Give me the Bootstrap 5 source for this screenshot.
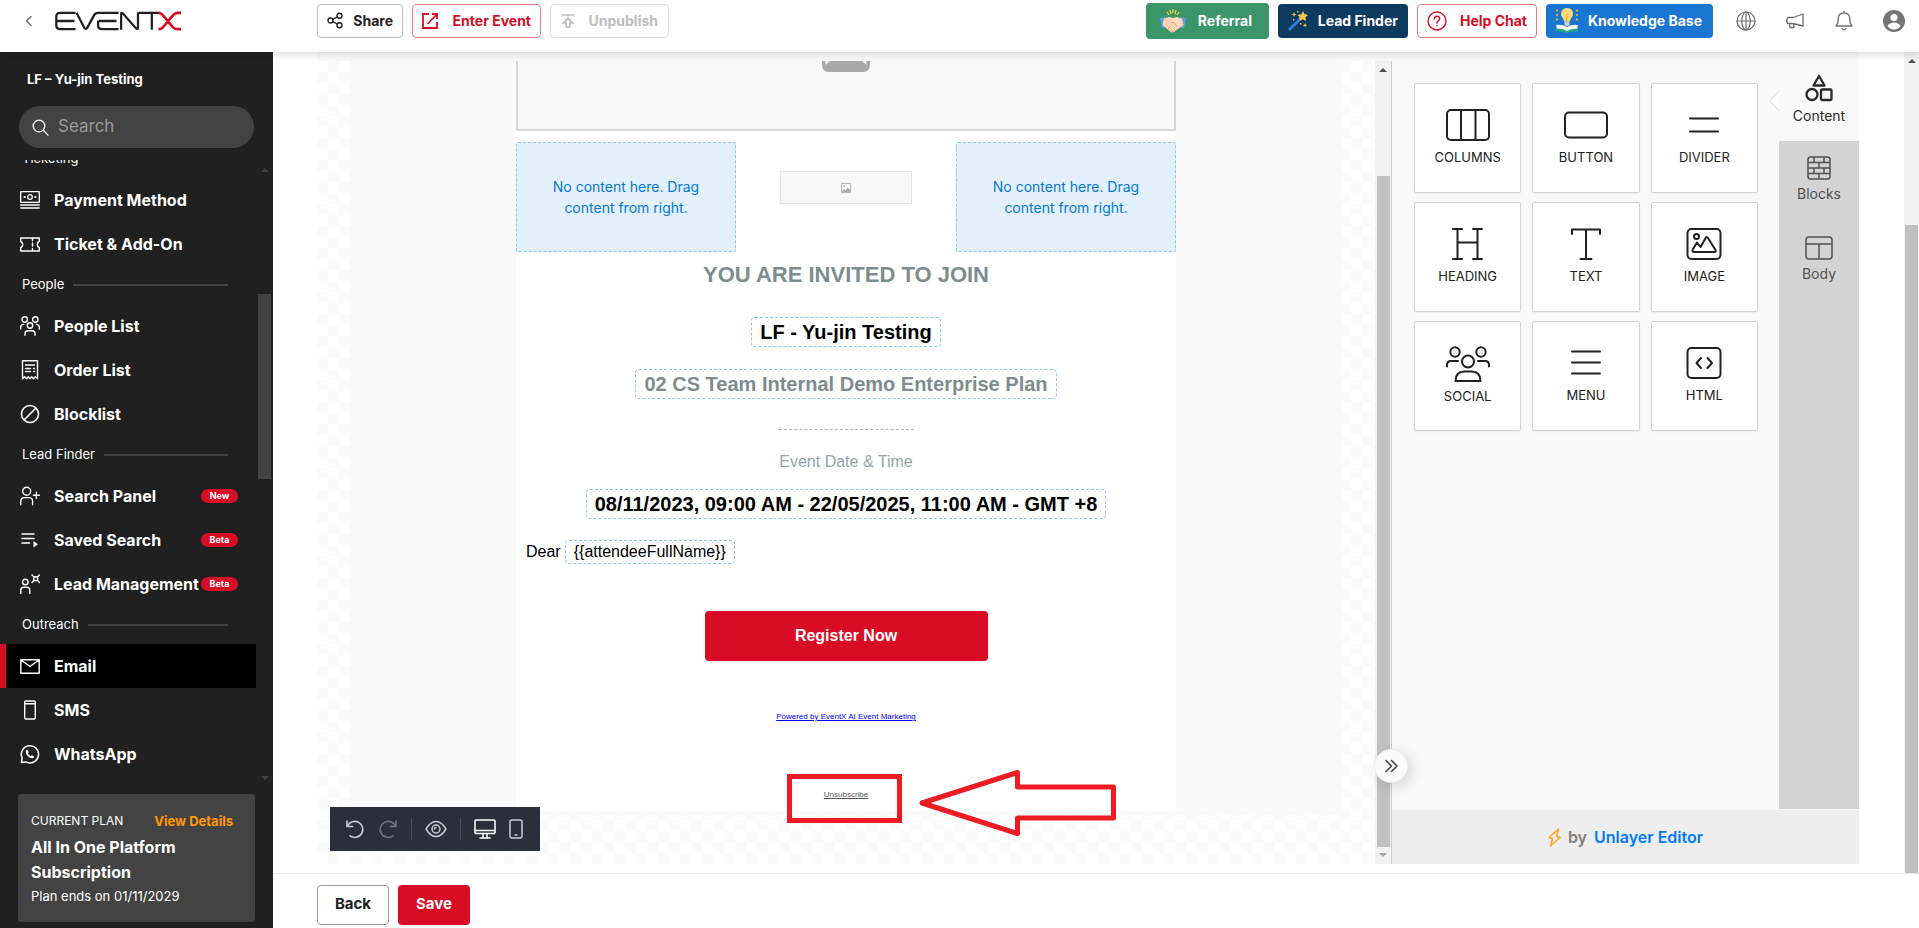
<!DOCTYPE html>
<html lang="en">
<head>
<meta charset="utf-8">
<meta name="viewport" content="width=device-width, initial-scale=1">
<title>EventX – Email editor</title>
<link href="https://cdn.jsdelivr.net/npm/bootstrap@5.3.0/dist/css/bootstrap.min.css" rel="stylesheet">
<style>
  :root { --brand: #d80c24; --ink: #212121; --side: #202020; --side-2: #434343; }
  body { font-family: Inter, "Liberation Sans", sans-serif; font-size: 14px; color: var(--ink); background: #fff; }
  svg { display: block; flex: none; }
  .ln { fill: none; stroke: currentColor; stroke-linecap: round; stroke-linejoin: round; }

  /* Header */
  .topbar { height: 52px; padding: 0 14px 11px 22px; z-index: 5; box-shadow: 0 2px 8px rgba(0,0,0,.16); }
  .brand-zone { width: 295px; }
  .btn-row { gap: 9px; }
  .icon-row { gap: 29px; margin-left: 14px; }
  .hbtn { height: 34px; padding: 0 9px; border-radius: 4px; font-size: 14px; font-weight: 700; display: inline-flex; align-items: center; justify-content: space-between; white-space: nowrap; line-height: 20px; }
  .hbtn-share { width: 86px; border-color: #bdbdbd; color: var(--ink); }
  .hbtn-enter { width: 129px; border-color: #ec7888; color: var(--brand); }
  .hbtn-unpub { width: 119px; padding: 0 10px; }
  .hbtn-unpub:disabled { border-color: #dedede; color: #bdbdbd; opacity: 1; }
  .hbtn-ref { width: 123px; height: 36px; padding: 0 16px 0 13px; background: #3a9569; color: #fff; }
  .hbtn-lead { width: 130px; background: #0d3a5f; color: #fff; }
  .hbtn-help { width: 120px; border-color: #ec7888; color: var(--brand); }
  .hbtn-kb { width: 167px; padding: 0 10px 0 8px; background: #1976d2; color: #fff; }
  .icon-btn { padding: 0; border: 0; background: none; color: #6e6e6e; }

  /* Sidebar */
  .sidebar { width: 273px; background: var(--side); color: #fff; }
  .event-name { padding: 17px 27px 0; font-size: 13px; line-height: 20px; font-weight: 700; }
  .search-box { height: 42px; margin: 17px 19px 0; padding: 0 13px; gap: 7px; border-radius: 21px; background: var(--side-2); }
  .search-box input { border: 0; background: none; color: #fff; outline: 0; width: 100%; font-size: 17px; }
  .search-box input::placeholder { color: #9a9a9a; opacity: 1; }
  .side-scroll { margin-top: 12px; height: 624px; overflow: hidden; }
  .side-menu { width: 256px; margin-top: -20px; }
  .side-head { height: 38px; padding: 0 28px 0 22px; gap: 9px; font-size: 13px; }
  .side-head::after { content: ""; flex: 1; height: 2px; background: var(--side-2); }
  .side-link { height: 44px; padding: 0 18px 0 20px; color: #fff; font-size: 16px; font-weight: 700; text-decoration: none; white-space: nowrap; }
  .side-link svg { margin-right: 14px; }
  .side-link.active { background: #000; border-left: 6px solid var(--brand); padding-left: 14px; }
  .tag { margin-left: auto; flex: none; border-radius: 7px; width: 37px; height: 14px; background: var(--brand); font-size: 9px; line-height: 14px; text-align: center; font-weight: 700; }
  .side-bar { width: 17px; color: var(--side-2); }
  .side-thumb { width: 13px; height: 185px; margin-top: 122px; background: var(--side-2); }
  .plan { margin: 10px 18px 6px; padding: 17px 13px 12px; height: 128px; border-radius: 4px; background: var(--side-2); }
  .plan-head { line-height: 20px; margin-bottom: 4px; font-size: 12px; }
  .plan-name { font-size: 16px; line-height: 25px; font-weight: 700; }
  .plan-end { font-size: 13px; line-height: 22px; }
  .plan a { color: #ff9800; font-size: 13px; font-weight: 700; text-decoration: none; margin-right: 9px; }

  .up, .down { width: 0; height: 0; border: 4px solid transparent; }
  .up { border-top-width: 0; border-bottom-color: currentColor; }
  .down { border-bottom-width: 0; border-top-color: currentColor; }

  /* Page scrollbar */
  .page-bar { width: 15px; background: #f1f1f1; color: #505050; padding-top: 7px; }
  .page-thumb { width: 13px; margin-top: 162px; background: #c1c1c1; }

  /* Editor */
  .editor { margin: 0 45px 9px 44px; padding-top: 9px; background: #f9f9f9; }
  .canvas { overflow: hidden; background: repeating-conic-gradient(#fbfbfb 0 25%, #fff 0 50%) 0 0 / 22px 22px; }
  .sheet { margin: 0 33px; background: #fafafa; padding-bottom: 4px; }
  .mail { width: 660px; height: 750px; margin: 0 auto; background: #fff; font-family: "Liberation Sans", Arial, sans-serif; text-align: center; color: #000; }
  .hero-ph { height: 70px; border: 2px solid #d6d6d6; border-top: 0; background: #f9f9f9; }
  .mail-cols { margin-top: 11px; }
  .drop-zone { height: 110px; border: 1px dashed #8cc8ec; background: #e1f0fa; color: #0879d1; border-radius: 2px; font-family: Inter, sans-serif; font-size: 14px; line-height: 21px; }
  .small-ph { width: 132px; height: 33px; margin-top: 29px; border: 1px solid #e2e2e2; background: #f8f8f8; }
  .gray-title { color: #7e8c8d; }
  .m-h1 { font-size: 22px; line-height: 30px; font-weight: 700; margin: 8px 0 27px; }
  .merge { display: inline-block; border: 1px dashed #8cc8ec; border-radius: 4px; padding: 0 8px; font-size: 20px; line-height: 28px; font-weight: 700; }
  .merge-sm { font-size: 16px; line-height: 22px; font-weight: 400; }
  .dash-line { width: 135px; margin: 30px auto 20px; border-top: 1px dashed #b5b5b5; }
  .date-label { font-size: 16px; line-height: 24px; margin-bottom: 15px; color: #95a5a6; }
  .greeting { padding: 21px 10px 47px; font-size: 16px; }
  .register { width: 283px; height: 50px; border: 0; border-radius: 4px; background: var(--brand); color: #fff; font-size: 16px; font-weight: 700; }
  .fine { font-size: 8px; line-height: 12px; margin-top: 50px; }
  .unsub { padding-right: 3px; margin-top: 51px; }
  .mark-box { width: 115px; height: 49px; padding: 10px 0 0 3px; border: 5px solid #ed1c24; font-size: 8px; line-height: 12px; }
  .arrow { left: 403px; top: -5px; }

  .canvas-bar { width: 16px; background: #f1f1f1; color: #505050; padding: 7px 0; }
  .canvas-thumb { width: 13px; margin: 104px 0 6px; background: #c1c1c1; }
  .toolbar-dark { left: 13px; bottom: 13px; width: 210px; height: 44px; background: #29303a; color: #c9cdd2; padding: 0 15px; gap: 13px; }
  .toolbar-dark .rule { width: 1px; height: 22px; background: #4b525c; }

  .panel { width: 468px; border-left: 1px solid #cdcdcd; background: #f9f9f9; }
  .tools { display: grid; grid-template-columns: repeat(3, 1fr); gap: 9px 11px; align-content: start; padding: 22px 21px 0 22px; }
  .tool { height: 110px; border: 1px solid #d4d4d4; border-radius: 2px; background: #fff; box-shadow: 0 1px 2px rgba(0,0,0,.06); font-size: 13px; line-height: 20px; color: #212121; padding: 0 0 1px; }
  .tool svg { margin: 0 auto 6px; }
  .tabs { width: 80px; background: #d4d4d4; }
  .tab-btn { height: 80px; border: 0; padding: 0 0 3px; background: none; color: #505050; font-size: 14px; line-height: 20px; }
  .tab-btn.active { background: #f9f9f9; color: #2a2a2a; }
  .notch { left: -10px; top: 30px; }
  .panel-foot { height: 55px; background: #eee; border-top: 1px solid #f9f9f9; font-size: 16px; font-weight: 600; color: #7f7f7f; gap: 7px; }
  .panel-foot a { color: #007bff; text-decoration: none; }
  .collapse-btn { left: -18px; bottom: 81px; width: 34px; height: 34px; border-radius: 50%; border: 1px solid #ececec; background: #fafafa; color: #444; padding: 0; box-shadow: 4px 4px 14px rgba(0,0,0,.14); z-index: 2; }

  .actions { height: 55px; padding: 11px 44px 0; border-top: 1px solid #e8e8e8; gap: 9px; }
  .act { height: 40px; width: 72px; padding: 0 0 2px; border-radius: 4px; font-size: 15px; font-weight: 700; }
  .act-back { border-color: #999; color: var(--ink); }
  .act-save { background: var(--brand); color: #fff; }
</style>
</head>
<body class="vh-100 d-flex flex-column overflow-hidden">

<header class="topbar d-flex align-items-center bg-white position-relative flex-shrink-0">
  <div class="brand-zone d-flex align-items-center">
    <button class="icon-btn" aria-label="Go back"><svg width="14" height="14" viewBox="0 0 14 14" class="ln" stroke-width="1.5"><path d="M9 2.5 4.500 7 9 11.500"/></svg></button>
    <svg class="ms-3" width="129" height="20" viewBox="-3 0 126 19" fill="none" stroke="#212121" stroke-width="2.200" aria-label="EventX">
      <path d="M20 1.500H5Q1.200 1.500 1.200 5V14Q1.200 17.500 5 17.500H20M2 9.500H19M21 1.500 28.500 16Q30 18.500 31.500 16L38 4Q39.300 1.500 42 1.500H62M43 9.500H60M62 17.500H46Q42 17.500 42 14V9M64.500 18V3Q64.500 .5 66.500 2.500L79 16.500Q81 18.500 81 15.500V1M82 1.500H102M94.500 2V18"/>
      <path stroke="#d80c24" stroke-width="2.600" d="M101 1.500Q103.500 1.500 105 3.500L115 15.500Q116.800 17.500 119.500 17.500H123M123 1.500H120Q117 1.500 115.500 3.500L105.500 15.500Q104 17.500 101 17.500"/>
    </svg>
  </div>
  <div class="btn-row d-flex align-items-center">
    <button class="btn hbtn hbtn-share"><svg width="17" height="17" viewBox="0 0 17 17" class="ln" stroke-width="1.400"><circle cx="3.500" cy="8.500" r="2.500"/><circle cx="12.500" cy="3.800" r="2.500"/><circle cx="12.500" cy="13.200" r="2.500"/><path d="m5.800 7.300 4.400-2.300M5.800 9.700l4.400 2.300"/></svg>Share</button>
    <button class="btn hbtn hbtn-enter"><svg width="16" height="16" viewBox="0 0 16 16" fill="none" stroke="currentColor" stroke-width="1.800"><path d="M7 1H1v14h14V9M10 1h5v5M15 1 5.500 11"/></svg>Enter Event</button>
    <button class="btn hbtn hbtn-unpub" disabled><svg width="14" height="14" viewBox="0 0 14 14" fill="none" stroke="currentColor" stroke-width="1.700"><path d="M1 1h12M5.200 13V9H2.500L7 4.300 11.500 9H8.800v4z"/></svg>Unpublish</button>
  </div>
  <div class="btn-row d-flex align-items-center ms-auto">
    <button class="btn hbtn hbtn-ref"><svg width="26" height="24" viewBox="0 0 26 24"><path d="M0 9 5 8l3 10-6 1zM26 9l-5-1-3 10 6 1z" fill="#5aa0e6"/><path d="M4 9.500 9 8l4 1 4-1 5 1.500L23.500 16 14 23q-2 1-4-.5L2.500 16z" fill="#fbd0b3"/><path d="m11 11 3-2 4 .5 3.500 6-3.500 1-4-4-2.500 1z" fill="#fddfca"/><path d="m8 20 2-2m0 4 2-2m0 3 2-2M17 17l-4-4-2 1" fill="none" stroke="#e59a7b"/><path d="m7 3 2 3M10 1l1 4M13 0v4M16 1l-1 4M19 3l-2 3" stroke="#f7dc3e" stroke-width="1.200"/></svg>Referral</button>
    <button class="btn hbtn hbtn-lead"><svg width="20" height="20" viewBox="0 0 20 20"><path d="M0 18 11 7l2 2L2 20z" fill="#2e7de0"/><path d="m11 7 2-2 2 2-2 2z" fill="#f4f4f4"/><path d="m15 0 1.400 3L20 4l-2.500 2.300.5 3.700-3.300-1.700L11.500 10l.5-3.600L9.500 4l3.900-.8z" fill="#ffc83d"/><path d="m6 1 .8 1.700 1.700.8-1.700.8L6 6l-.8-1.700-1.700-.8 1.700-.8zM17 12l.7 1.500 1.500.7-1.500.7L17 16.500l-.7-1.600-1.500-.7 1.500-.7zM5 8h1.500v1.500H5zM12 12h1.500v1.500H12zM9 0h1.500v1.500H9z" fill="#f6b73c"/></svg>Lead Finder</button>
    <button class="btn hbtn hbtn-help"><svg width="20" height="20" viewBox="0 0 20 20" class="ln" stroke-width="1.400"><circle cx="10" cy="10" r="9"/><path d="M7.300 8q.2-2.700 2.700-2.700T12.700 7.700Q12.700 9 11 10t-1 2.200M10 14.600v.3"/></svg>Help Chat</button>
    <button class="btn hbtn hbtn-kb"><svg width="24" height="25" viewBox="0 0 24 25"><path d="M1 17q6-1 11 2 5-3 11-2l-1 5q-6-1-10 2-4-3-10-2z" fill="#eef4e8"/><path d="M0 21q7-1 12 2 5-3 12-2l-1 2.500q-7-.5-11 1.500-4-2-11-1.500z" fill="#21a38b"/><path d="M12 0q6 .3 6 6 0 2.500-2 4.500-1 1-1 3H9q0-2-1-3-2-2-2-4.500 0-5.700 6-6z" fill="#ffd873"/><path d="M12 6v8" stroke="#e9a33a"/><path d="M9.500 13.500h5V17L12 18.500 9.500 17z" fill="#c8cdd3"/><path d="m1 2 2 1M1 7h2M1 12l2-1M23 2l-2 1M23 7h-2M23 12l-2-1" stroke="#f3b43f" stroke-width="1.500"/></svg>Knowledge Base</button>
    <div class="icon-row d-flex align-items-center">
      <button class="icon-btn" aria-label="Language"><svg width="20" height="20" viewBox="0 0 20 20" class="ln" stroke-width="1.200"><circle cx="10" cy="10" r="9"/><ellipse cx="10" cy="10" rx="4.200" ry="9"/><path d="M1 10h18M10 1v18"/></svg></button>
      <button class="icon-btn" aria-label="Announcements"><svg width="20" height="18" viewBox="0 0 20 18" class="ln" stroke-width="1.300"><path d="M18 2 8 5.500H2.500Q1 8.500 2.500 11.500H8L18 14zM4.500 12l.5 3.500h4L8.500 12"/></svg></button>
      <button class="icon-btn" aria-label="Notifications"><svg width="20" height="22" viewBox="0 0 20 22" class="ln" stroke-width="1.300"><path d="M10 1.500v1.300M2 16q2.200-2 2.200-5.500V8.600Q4.400 3.200 10 2.800q5.600.4 5.800 5.800v1.900Q15.800 14 18 16zM8 18.500q2 3 4 0"/></svg></button>
      <button class="icon-btn" aria-label="Account"><svg width="22" height="22" viewBox="0 0 22 22"><circle cx="11" cy="11" r="11" fill="#757575"/><circle cx="11" cy="7.500" r="3.500" fill="#fff"/><path d="M4.500 16q2-3.500 6.500-3.500t6.500 3.500Q15 19.500 11 19.500T4.500 16z" fill="#fff"/></svg></button>
    </div>
  </div>
</header>

<div class="d-flex flex-grow-1" style="min-height:0">
  <aside class="sidebar d-flex flex-column flex-shrink-0">
    <div class="event-name">LF – Yu-jin Testing</div>
    <label class="search-box d-flex align-items-center">
      <svg width="17" height="17" viewBox="0 0 17 17" class="ln" stroke-width="1.300"><circle cx="7" cy="7" r="5.800"/><path d="m11.300 11.300 4.700 4.700"/></svg>
      <input type="text" placeholder="Search" aria-label="Search">
    </label>
    <div class="side-scroll d-flex">
      <nav class="side-menu">
        <div class="side-head d-flex align-items-center">Ticketing</div>
        <a href="#" class="side-link d-flex align-items-center"><svg width="20" height="18" viewBox="0 0 20 18" class="ln" stroke-width="1.300"><path d="M.7.700h18.600v10.600H.7zM.7 14h18.600M.7 17h18.600"/><circle cx="10" cy="6" r="2.300"/><path d="M4.500 6h.3M15.200 6h.3" stroke-width="2"/></svg>Payment Method</a>
        <a href="#" class="side-link d-flex align-items-center"><svg width="20" height="15" viewBox="0 0 20 15" class="ln" stroke-width="1.400"><path d="M.7 1h18.600v3.500q-2 .5-2 3t2 3V14H.7v-3.500q2-.5 2-3t-2-3zM12.500 1v2.500M12.500 6v3M12.500 11.500V14"/></svg>Ticket &amp; Add-On</a>
        <div class="side-head d-flex align-items-center">People</div>
        <a href="#" class="side-link d-flex align-items-center"><svg width="20" height="20" viewBox="0 0 20 20" class="ln" stroke-width="1.400"><circle cx="4.700" cy="3.500" r="2.700"/><circle cx="15.300" cy="3.500" r="2.700"/><circle cx="10" cy="9.500" r="2.700"/><path d="M.7 13V11q0-2.500 3-2.600M19.300 13V11q0-2.500-3-2.600M5 19.300v-1.500q0-3 3-3h4q3 0 3 3v1.500"/></svg>People List</a>
        <a href="#" class="side-link d-flex align-items-center"><svg width="20" height="20" viewBox="0 0 20 20" class="ln" stroke-width="1.400"><path d="M2.500.8h15v18l-2-2-2 2-1.750-2-1.750 2-1.750-2-1.750 2-2-2-2 2zM5.500 5h9M5.500 8.500h5M5.500 11.500h5M13.500 8.500h1M13.500 11.500h1"/></svg>Order List</a>
        <a href="#" class="side-link d-flex align-items-center"><svg width="20" height="20" viewBox="0 0 20 20" class="ln" stroke-width="1.600"><circle cx="10" cy="10" r="8.500"/><path d="m4.300 15.700 11.400-11.400"/></svg>Blocklist</a>
        <div class="side-head d-flex align-items-center">Lead Finder</div>
        <a href="#" class="side-link d-flex align-items-center"><svg width="20" height="20" viewBox="0 0 21 20" class="ln" stroke-width="1.400"><circle cx="7" cy="5" r="4.200"/><path d="M.8 19.300v-3.800q0-3.800 3.800-3.800h4.800q3.800 0 3.800 3.800v3.800M17.200 6v6.500M14 9.200h6.400"/></svg>Search Panel<span class="tag">New</span></a>
        <a href="#" class="side-link d-flex align-items-center"><svg width="20" height="20" viewBox="0 0 20 20" class="ln" stroke-width="1.500"><path d="M2 4h12M2 8.500h12M2 13h7.500"/><path d="m13.500 11 4.500 3.300-4.500 3.300z" fill="currentColor" stroke="none"/></svg>Saved Search<span class="tag">Beta</span></a>
        <a href="#" class="side-link d-flex align-items-center"><svg width="20" height="20" viewBox="0 0 20 20" class="ln" stroke-width="1.400"><circle cx="5.300" cy="8" r="2.800"/><path d="M.8 19.500v-3.200q0-3 3-3h3q3 0 3 3v3.200M12 1l7.500 7.500M19.500 1 12 8.500"/><circle cx="15.700" cy="4.700" r="2" fill="#202020"/></svg>Lead Management<span class="tag">Beta</span></a>
        <div class="side-head d-flex align-items-center">Outreach</div>
        <a href="#" class="side-link active d-flex align-items-center"><svg width="20" height="15" viewBox="0 0 20 15" class="ln" stroke-width="1.400"><path d="M.8.800h18.400v13.400H.8zM.8.800 10 7.500 19.200.800"/></svg>Email</a>
        <a href="#" class="side-link d-flex align-items-center"><svg width="20" height="20" viewBox="0 0 20 20" class="ln" stroke-width="1.400"><rect x="4.700" y="1" width="10.600" height="18" rx="1.200"/><path d="M5 3.800h10"/></svg>SMS</a>
        <a href="#" class="side-link d-flex align-items-center"><svg width="20" height="20" viewBox="0 0 20 20" class="ln" stroke-width="1.500"><path d="m1.500 18.500.6-4.700A8.600 8.600 0 1 1 6 17.900z"/><path d="M5.800 7q1-2 2-.8l1 2-1 1q.8 2 3 3l1-1 2.200 1q.8 1-1.200 2-2 .6-4.800-2Q5.400 9.600 5.800 7z" fill="currentColor" stroke="none"/></svg>WhatsApp</a>
      </nav>
      <div class="side-bar d-flex flex-column align-items-center">
        <i class="up mt-2"></i><div class="side-thumb"></div><i class="down mt-auto mb-1"></i>
      </div>
    </div>
    <section class="plan">
      <div class="plan-head d-flex justify-content-between align-items-center"><span>CURRENT PLAN</span><a href="#">View Details</a></div>
      <div class="plan-name">All In One Platform Subscription</div>
      <div class="plan-end">Plan ends on 01/11/2029</div>
    </section>
  </aside>

  <div class="d-flex flex-column flex-grow-1" style="min-width:0">
    <div class="d-flex flex-grow-1" style="min-height:0">
      <main class="editor d-flex flex-grow-1" style="min-width:0">
        <section class="canvas flex-grow-1 position-relative">
          <div class="sheet">
            <div class="mail">
              <div class="hero-ph"><svg class="mx-auto" width="48" height="11" viewBox="0 0 48 11"><path d="M0 0h3.500v4L8 0h32l4.500 4V0H48v3q0 8-7 8H7Q0 11 0 3z" fill="#a9a9a9"/></svg></div>
              <div class="mail-cols row g-0 align-items-start">
                <div class="col-4"><div class="drop-zone d-flex align-items-center px-4">No content here. Drag content from right.</div></div>
                <div class="col-4"><div class="small-ph mx-auto d-flex align-items-center justify-content-center"><svg width="10" height="10" viewBox="0 0 11 11"><path d="M.5.500h10v10H.5z" fill="#fff" stroke="#a9a9a9"/><circle cx="3.500" cy="3.500" r="1" fill="#a9a9a9"/><path d="m1 9.500 2.500-2.500 1.500 1 2.500-3L10 8v2H1z" fill="#a9a9a9"/></svg></div></div>
                <div class="col-4"><div class="drop-zone d-flex align-items-center px-4">No content here. Drag content from right.</div></div>
              </div>
              <h1 class="m-h1 gray-title">YOU ARE INVITED TO JOIN</h1>
              <div class="d-flex flex-column align-items-center" style="gap:22px">
                <span class="merge">LF - Yu-jin Testing</span>
                <span class="merge gray-title">02 CS Team Internal Demo Enterprise Plan</span>
              </div>
              <div class="dash-line"></div>
              <div class="date-label">Event Date &amp; Time</div>
              <div class="d-flex justify-content-center"><span class="merge">08/11/2023, 09:00 AM - 22/05/2025, 11:00 AM - GMT +8</span></div>
              <div class="greeting d-flex align-items-center gap-1">Dear <span class="merge merge-sm">{{attendeeFullName}}</span></div>
              <button class="register">Register Now</button>
              <div class="fine"><a href="#" style="color:#00f">Powered by EventX AI Event Marketing</a></div>
              <div class="unsub position-relative d-flex justify-content-center">
                <div class="mark-box d-flex justify-content-center"><a href="#" style="color:#555">Unsubscribe</a></div>
                <svg class="arrow position-absolute" width="200" height="70" viewBox="0 0 200 70" fill="none" stroke="#ed1c24" stroke-width="5"><path d="M3 34 98.500 3.500V18H194.500V49H98.500V64.500z" stroke-linejoin="round"/></svg>
              </div>
            </div>
          </div>
          <div class="toolbar-dark position-absolute d-flex align-items-center">
            <button class="icon-btn" style="color:inherit" aria-label="Undo"><svg width="20" height="20" viewBox="0 0 20 20" class="ln" stroke-width="1.600"><path d="M2 2v5.500h5.500M2.500 7.200A8 8 0 1 1 5 16.800"/></svg></button>
            <button class="icon-btn" style="color:#6f757d" aria-label="Redo"><svg width="20" height="20" viewBox="0 0 20 20" class="ln" stroke-width="1.600"><path d="M18 2v5.500h-5.500M17.500 7.200A8 8 0 1 0 15 16.800"/></svg></button>
            <span class="rule"></span>
            <button class="icon-btn" style="color:inherit" aria-label="Preview"><svg width="22" height="18" viewBox="0 0 22 18" class="ln" stroke-width="1.500"><path d="M1 9Q5.500 1.500 11 1.500T21 9q-4.500 7.500-10 7.500T1 9z"/><circle cx="11" cy="9" r="4"/><path d="M11 7.500q-1.500 0-1.500 1.500"/></svg></button>
            <span class="rule"></span>
            <button class="icon-btn" style="color:#fff" aria-label="Desktop"><svg width="22" height="20" viewBox="0 0 22 20" class="ln" stroke-width="1.500"><rect x="1" y="1" width="20" height="13.500" rx="1"/><path d="M1 11.500h20M9 14.500v4M13 14.500v4M6 19h10"/></svg></button>
            <button class="icon-btn" style="color:inherit" aria-label="Mobile"><svg width="14" height="20" viewBox="0 0 14 20" class="ln" stroke-width="1.500"><rect x="1" y="1" width="12" height="18" rx="2"/><path d="M6 16h2"/></svg></button>
          </div>
        </section>
        <div class="canvas-bar d-flex flex-column align-items-center flex-shrink-0"><i class="up"></i><div class="canvas-thumb flex-grow-1"></div><i class="down" style="color:#a3a3a3"></i></div>

        <aside class="panel d-flex flex-column flex-shrink-0 position-relative">
          <div class="d-flex flex-grow-1">
            <div class="tools flex-grow-1">
              <button class="tool"><svg width="44" height="32" viewBox="0 0 44 32" class="ln" stroke-width="2"><rect x="1" y="1" width="42" height="30" rx="4"/><path d="M15 1v30M29.500 1v30"/></svg>COLUMNS</button>
              <button class="tool"><svg width="44" height="32" viewBox="0 0 44 32" class="ln" stroke-width="2"><rect x="1" y="3.500" width="42" height="25" rx="4"/></svg>BUTTON</button>
              <button class="tool"><svg width="44" height="32" viewBox="0 0 44 32" class="ln" stroke-width="2"><path d="M8 9.500h28M8 22.500h28"/></svg>DIVIDER</button>
              <button class="tool"><svg width="44" height="32" viewBox="0 0 44 32" class="ln" stroke-width="2"><path d="M7 1h9M27 1h9M7 31h9M27 31h9M11.500 1v30M31.500 1v30M11.500 14.500h20"/></svg>HEADING</button>
              <button class="tool"><svg width="44" height="32" viewBox="0 0 44 32" class="ln" stroke-width="2"><path d="M8 6V1.500h28V6M22 1.500V31M16.500 31h11"/></svg>TEXT</button>
              <button class="tool"><svg width="44" height="32" viewBox="0 0 44 32" class="ln" stroke-width="2"><rect x="5.500" y="1" width="33" height="30" rx="4"/><circle cx="14.500" cy="8.500" r="2.500"/><path d="M12 24q-2.500 0-1-3l4-6.500 3.500 4.500 5.500-9.500q1-1 2 .5l7.500 12q.7 2-1 2z"/></svg>IMAGE</button>
              <button class="tool"><svg width="44" height="36" viewBox="0 0 44 36" class="ln" stroke-width="2" style="margin-bottom:4px"><circle cx="9" cy="6" r="4.700"/><circle cx="35" cy="6" r="4.700"/><circle cx="22" cy="15.500" r="6"/><path d="M1 20.500V19q0-4 4-4h7M43 20.500V19q0-4-4-4h-7M9.500 35q0-9.500 9-9.500h7q9 0 9 9.500z"/></svg>SOCIAL</button>
              <button class="tool"><svg width="44" height="32" viewBox="0 0 44 32" class="ln" stroke-width="2"><path d="M8 4.500h28M8 15.500h28M8 26.500h28"/></svg>MENU</button>
              <button class="tool"><svg width="44" height="32" viewBox="0 0 44 32" class="ln" stroke-width="2"><rect x="5.500" y="1" width="33" height="30" rx="4"/><path d="m19 11-4.500 5 4.500 5M25.500 11l4.500 5-4.500 5"/></svg>HTML</button>
            </div>
            <div class="tabs d-flex flex-column position-relative">
              <svg class="notch position-absolute" width="11" height="20" viewBox="0 0 11 20" fill="#fff" stroke="#d4d4d4"><path d="M10.500 0 .7 10l9.800 10"/></svg>
              <button class="tab-btn active d-flex flex-column align-items-center justify-content-center"><svg class="mb-1" width="28" height="28" viewBox="0 0 28 28" fill="none" stroke="currentColor" stroke-width="2.300" stroke-linejoin="round"><path d="m14 2 5.500 9.500h-11z"/><circle cx="7" cy="20.500" r="5.500"/><rect x="16" y="15.500" width="10.500" height="10.500" rx="1"/></svg>Content</button>
              <button class="tab-btn d-flex flex-column align-items-center justify-content-center"><svg class="mb-1" width="24" height="24" viewBox="0 0 24 24" fill="none" stroke="currentColor" stroke-width="1.500"><rect x="1" y="1" width="22" height="22" rx="2.500"/><path d="M1 6.500h22M1 12h22M1 17.500h22M7 1v5.500M17 1v5.500M12 6.500V12M7 12v5.500M17 12v5.500M12 17.500V23"/></svg>Blocks</button>
              <button class="tab-btn d-flex flex-column align-items-center justify-content-center"><svg class="mb-1" width="28" height="24" viewBox="0 0 28 24" fill="none" stroke="currentColor" stroke-width="1.500"><rect x="1" y="1" width="26" height="22" rx="3"/><path d="M1 8h26M14 8v15"/></svg>Body</button>
            </div>
          </div>
          <div class="panel-foot d-flex align-items-center justify-content-center">
            <svg width="13" height="19" viewBox="0 0 13 19" class="ln" stroke-width="1.600" style="color:#f9a825"><path d="M10.500 1 1 9.500l3.500 1.200L2.500 18 12 9.500 8.500 8.200z"/></svg>
            <span>by</span> <a href="#">Unlayer Editor</a>
          </div>
          <button class="collapse-btn position-absolute d-flex align-items-center justify-content-center" aria-label="Collapse panel"><svg width="14" height="14" viewBox="0 0 14 14" class="ln" stroke-width="1.600"><path d="m2 1.500 5.500 5.500L2 12.500M7.500 1.500 13 7l-5.500 5.500"/></svg></button>
        </aside>
      </main>
      <div class="page-bar d-flex flex-column align-items-center flex-shrink-0"><i class="up"></i><div class="page-thumb flex-grow-1"></div></div>
    </div>
    <footer class="actions d-flex flex-shrink-0 bg-white">
      <button class="btn act act-back">Back</button>
      <button class="btn act act-save">Save</button>
    </footer>
  </div>
</div>

<script src="https://cdn.jsdelivr.net/npm/bootstrap@5.3.0/dist/js/bootstrap.bundle.min.js"></script>
</body>
</html>
